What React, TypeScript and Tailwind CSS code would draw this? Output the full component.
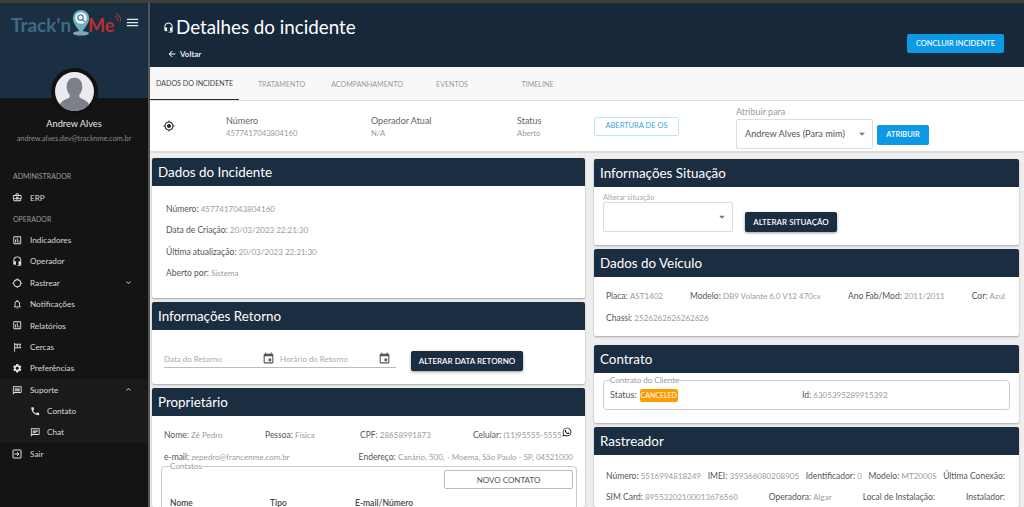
import React from 'react';
import {
  MdOutlineBusinessCenter,
  MdOutlineAssessment,
  MdHeadsetMic,
  MdGpsNotFixed,
  MdGpsFixed,
  MdOutlineNotifications,
  MdOutlineTour,
  MdSettings,
  MdOutlineMessage,
  MdCall,
  MdOutlineChat,
  MdExpandMore,
  MdExpandLess,
  MdArrowBack,
  MdEvent,
  MdArrowDropDown,
  MdMenu,
} from 'react-icons/md';
import { FaWhatsapp } from 'react-icons/fa';

const Logo = () => (
  <div className="w-[108px] shrink-0 flex items-center h-[30px] font-['Lato',sans-serif] font-bold leading-none">
    <span className="text-[#3d6a85] text-[19px] w-[59px] shrink-0 whitespace-nowrap pt-[4px]">Track'n</span>
    <svg width="22" height="27" viewBox="0 0 24 30" className="-mb-[1px] shrink-0">
      <ellipse cx="12" cy="27" rx="9" ry="2.500" fill="#7fa6b5" />
      <path d="M12 27 C7 20 3 16 3 10 a9 9 0 0 1 18 0 C21 16 17 20 12 27 Z" fill="#6fb0bf" />
      <circle cx="12" cy="10" r="6.500" fill="#f2f5f6" />
      <circle cx="11.500" cy="9.500" r="3" fill="none" stroke="#5c8a9c" strokeWidth="1.500" />
      <path d="M14 12 l2.500 2.500" stroke="#5c8a9c" strokeWidth="1.500" />
    </svg>
    <span className="text-[#b5302f] text-[18px] pt-[5px] -ml-[4px]">Me</span>
    <svg width="8" height="14" viewBox="0 0 9 14" className="mb-[6px] shrink-0" fill="none" stroke="#b5302f" strokeWidth="1.200">
      <path d="M1 4 a4 4 0 0 1 3 5" />
      <path d="M2 1 a7 7 0 0 1 5 9" />
    </svg>
  </div>
);

const Avatar = () => (
  <div className="w-[47px] h-[47px] rounded-full bg-[#121212] p-[4px]">
    <div className="w-full h-full rounded-full bg-[#e9ebef] overflow-hidden">
      <svg viewBox="0 0 40 40" className="w-full h-full">
        <path
          d="M20 6 c-5 0 -8 3.500 -8 9 c0 3 1 6 3 8 v3 c-2 2 -9 3 -10 8 v6 h30 v-6 c-1 -5 -8 -6 -10 -8 v-3 c2 -2 3 -5 3 -8 c0 -5.500 -3 -9 -8 -9 Z"
          fill="#7d8087"
        />
      </svg>
    </div>
  </div>
);

const ExitBox = () => (
  <svg width="10" height="10" viewBox="0 0 10 10" fill="none" stroke="#e4e4e4" strokeWidth="1">
    <rect x="1" y="1" width="8" height="8" rx="0.500" />
    <path d="M2.500 5 h4.500 M5 3.200 l2 1.800 l-2 1.800" />
  </svg>
);

type NavItem = { label: string; icon: React.ReactNode; trail?: React.ReactNode };

const NavRow = ({ label, icon, trail }: NavItem) => (
  <div className="flex items-center h-[21.4px] pl-[12px] pr-[15px] text-[#d9d9d9]">
    <span className="w-[18px] flex justify-start text-[#e4e4e4] text-[10.5px]">{icon}</span>
    <span className="text-[8.2px] flex-1">{label}</span>
    {trail}
  </div>
);

const SubRow = ({ label, icon }: NavItem) => (
  <div className="flex items-center h-[21.4px] pl-[30px] text-[#d9d9d9]">
    <span className="w-[17px] flex text-[#e4e4e4] text-[10.5px]">{icon}</span>
    <span className="text-[8.2px]">{label}</span>
  </div>
);

const Sidebar = () => (
  <aside className="w-[150px] shrink-0 flex flex-col bg-[#141414] border-r-[2px] border-[#555]">
    <div className="h-[95px] bg-[#1b2f43] flex flex-col pl-[11px] pt-[4px] relative">
      <div className="flex items-center">
        <Logo />
        <MdMenu className="text-[#e6e6e6] text-[15px] ml-[6px] shrink-0" />
      </div>
      <div className="absolute left-[51px] top-[65px]">
        <Avatar />
      </div>
    </div>
    <div className="flex flex-col items-center pt-[20px]">
      <div className="text-[#e8e8e8] text-[9.2px] leading-[12px]">Andrew Alves</div>
      <div className="text-[#8d8d8d] text-[7.3px] leading-[10px] mt-[4px]">andrew.alves.dev@tracknme.com.br</div>
    </div>
    <div className="mt-[27px] text-[7px] text-[#9a9a9a] pl-[13px] leading-[10px]">ADMINISTRADOR</div>
    <div className="mt-[6px]">
      <NavRow label="ERP" icon={<MdOutlineBusinessCenter />} />
    </div>
    <div className="mt-[6px] text-[7px] text-[#9a9a9a] pl-[13px] leading-[10px]">OPERADOR</div>
    <div className="mt-[5px]">
      <NavRow label="Indicadores" icon={<MdOutlineAssessment />} />
      <NavRow label="Operador" icon={<MdHeadsetMic />} />
      <NavRow label="Rastrear" icon={<MdGpsNotFixed />} trail={<MdExpandMore className="text-[9px] text-[#ccc]" />} />
      <NavRow label="Notificações" icon={<MdOutlineNotifications />} />
      <NavRow label="Relatórios" icon={<MdOutlineAssessment />} />
      <NavRow label="Cercas" icon={<MdOutlineTour />} />
      <NavRow label="Preferências" icon={<MdSettings />} />
      <div className="bg-[#1a1a1a]">
        <NavRow label="Suporte" icon={<MdOutlineMessage />} trail={<MdExpandLess className="text-[9px] text-[#ccc]" />} />
        <SubRow label="Contato" icon={<MdCall />} />
        <SubRow label="Chat" icon={<MdOutlineChat />} />
      </div>
      <NavRow label="Sair" icon={<ExitBox />} />
    </div>
  </aside>
);

const Card = ({ title, children, className }: { title: string; children: React.ReactNode; className?: string }) => (
  <section className={`bg-white rounded-[2px] shadow-[0_1px_2px_rgba(0,0,0,0.3)] overflow-hidden ${className ?? ''}`}>
    <h2 className="bg-[#1b2d40] h-[28px] pl-[6px] pt-[1px] flex items-center text-white text-[13.4px] leading-none">{title}</h2>
    {children}
  </section>
);

const Field = ({ k, v, className }: { k: string; v: string; className?: string }) => (
  <span className={`text-[8.5px] leading-[12px] whitespace-nowrap ${className ?? ''}`}>
    <span className="text-[#555]">{k}: </span>
    <span className="text-[#9b9b9b] text-[8px]">{v}</span>
  </span>
);

const DarkButton = ({ label, className }: { label: string; className?: string }) => (
  <button className={`bg-[#1b2d40] text-white text-[8px] font-semibold rounded-[2px] shadow-[0_1px_3px_rgba(0,0,0,0.4)] ${className ?? ''}`}>{label}</button>
);

const tabs = [
  { label: 'DADOS DO INCIDENTE', w: 'w-[89px]', active: true },
  { label: 'TRATAMENTO', w: 'w-[85px]' },
  { label: 'ACOMPANHAMENTO', w: 'w-[86px]' },
  { label: 'EVENTOS', w: 'w-[84px]' },
  { label: 'TIMELINE', w: 'w-[87px]' },
];

const Header = () => (
  <>
    <header className="h-[64px] shrink-0 bg-[#17283a] flex justify-between pl-[13px] pr-[20px]">
      <div className="pt-[10px]">
        <div className="flex items-center text-white">
          <MdHeadsetMic className="text-[11px] mr-[2px]" />
          <span className="text-[18.8px] leading-[28px]">Detalhes do incidente</span>
        </div>
        <div className="flex items-center mt-[7px] ml-[4px] text-white text-[8px] font-semibold">
          <MdArrowBack className="text-[10px] mr-[3px]" />
          Voltar
        </div>
      </div>
      <button className="self-start mt-[31px] w-[97px] h-[19px] bg-[#0c9ae6] text-white text-[7.5px] rounded-[2px] font-medium">CONCLUIR INCIDENTE</button>
    </header>
    <nav className="h-[34px] shrink-0 bg-[#f8f8f8] border-b border-[#dedede] flex">
      {tabs.map((t) => (
        <div
          key={t.label}
          className={`${t.w} ${t.active ? 'text-[#444] border-b border-[#1b2d40]' : 'text-[#9a9a9a]'} shrink-0 flex items-center justify-center pt-[3px] text-[7.1px] whitespace-nowrap`}
        >
          {t.label}
        </div>
      ))}
    </nav>
    <div className="h-[52px] shrink-0 bg-white border-b-[2px] border-[#dcdcdc] flex items-center relative">
      <MdGpsFixed className="ml-[13px] text-[12px] text-[#222] shrink-0" />
      <div className="ml-[51px] w-[145px] shrink-0 leading-[13px] pt-[2px]">
        <div className="text-[9px] text-[#666]">Número</div>
        <div className="text-[7.7px] text-[#9b9b9b]">4577417043804160</div>
      </div>
      <div className="w-[146px] shrink-0 leading-[13px] pt-[2px]">
        <div className="text-[9px] text-[#666]">Operador Atual</div>
        <div className="text-[7.7px] text-[#9b9b9b]">N/A</div>
      </div>
      <div className="w-[77px] shrink-0 leading-[13px] pt-[2px]">
        <div className="text-[9px] text-[#666]">Status</div>
        <div className="text-[7.7px] text-[#9b9b9b]">Aberto</div>
      </div>
      <button className="w-[85px] h-[19px] shrink-0 border border-[#bfe3f7] rounded-[2px] text-[#3aa5e0] text-[7.5px]">ABERTURA DE OS</button>
      <div className="ml-[57px] mt-[2px] shrink-0 flex flex-col">
        <span className="text-[9px] text-[#999] leading-[11px]">Atribuir para</span>
        <div className="mt-[2px] w-[137px] h-[30px] border border-[#ddd] rounded-[2px] flex items-center justify-between pl-[8px] pr-[3px] text-[#555] text-[9.2px]">
          Andrew Alves (Para mim)
          <MdArrowDropDown className="text-[14px] text-[#777]" />
        </div>
      </div>
      <button className="ml-[4px] mt-[17px] w-[52px] h-[20px] shrink-0 bg-[#0c9ae6] text-white text-[7.5px] rounded-[2px] font-semibold">ATRIBUIR</button>
    </div>
  </>
);

const LeftColumn = () => (
  <div className="w-[433px] shrink-0 flex flex-col gap-[4px]">
    <Card title="Dados do Incidente" className="h-[140px] shrink-0">
      <div className="pl-[14px] pt-[13px] flex flex-col">
        <Field k="Número" v="4577417043804160" className="!leading-[21.400px]" />
        <Field k="Data de Criação" v="20/03/2023 22:21:30" className="!leading-[21.400px]" />
        <Field k="Última atualização" v="20/03/2023 22:21:30" className="!leading-[21.400px]" />
        <Field k="Aberto por" v="Sistema" className="!leading-[21.400px]" />
      </div>
    </Card>
    <Card title="Informações Retorno" className="h-[82px] shrink-0">
      <div className="pl-[12px] pt-[21px] flex items-start">
        <div className="flex border-b border-[#bbb] w-[232px] h-[17px] text-[8px] text-[#aaa] items-start">
          <span className="w-[98px] pt-[2px] leading-[12px]">Data do Retorno</span>
          <MdEvent className="text-[13px] text-[#555] mt-[1px]" />
          <span className="ml-[5px] w-[98px] pt-[2px] leading-[12px]">Horário do Retorno</span>
          <MdEvent className="text-[13px] text-[#555] mt-[1px]" />
        </div>
        <DarkButton label="ALTERAR DATA RETORNO" className="ml-[15px] w-[112px] h-[20px]" />
      </div>
    </Card>
    <Card title="Proprietário" className="flex-1">
      <div className="px-[12px] pt-[13px]">
        <div className="flex items-center h-[12px]">
          <Field k="Nome" v="Zé Pedro" className="w-[101px]" />
          <Field k="Pessoa" v="Física" className="w-[95px]" />
          <Field k="CPF" v="28658991873" className="w-[113px]" />
          <div className="relative flex">
            <Field k="Celular" v="(11)95555-5555" />
            <FaWhatsapp className="absolute -right-[10px] -top-[2px] text-[10px] text-black" />
          </div>
        </div>
        <div className="flex items-center mt-[10px] h-[12px]">
          <Field k="e-mail" v="zepedro@francenme.com.br" className="w-[195px]" />
          <Field k="Endereço" v="Canário, 500, - Moema, São Paulo - SP, 04521000" />
        </div>
        <fieldset className="-ml-[3px] -mr-[4px] -mt-[1px] border border-[#ccc] rounded-[4px] pl-[8px] pr-[3px] h-[60px]">
          <legend className="text-[8px] text-[#999] leading-[8px]">Contatos</legend>
          <div className="flex justify-end">
            <button className="w-[129px] h-[19px] border border-[#bbb] rounded-[2px] text-[8px] text-[#555]">NOVO CONTATO</button>
          </div>
          <div className="flex mt-[10px] text-[8.5px] leading-[8px] font-semibold text-[#444]">
            <span className="w-[100px]">Nome</span>
            <span className="w-[85px]">Tipo</span>
            <span>E-mail/Número</span>
          </div>
        </fieldset>
      </div>
    </Card>
  </div>
);

const RightColumn = () => (
  <div className="w-[425px] shrink-0 flex flex-col gap-[4px] pt-[1px]">
    <Card title="Informações Situação" className="h-[86px] shrink-0">
      <div className="pl-[9px] pt-[7px] flex items-end">
        <div>
          <div className="text-[7.5px] leading-[8px] text-[#aaa]">Alterar situação</div>
          <div className="w-[130px] h-[30px] border border-[#ddd] rounded-[2px] flex items-center justify-end pr-[3px]">
            <MdArrowDropDown className="text-[14px] text-[#777]" />
          </div>
        </div>
        <DarkButton label="ALTERAR SITUAÇÃO" className="ml-[12px] w-[92px] h-[20px]" />
      </div>
    </Card>
    <Card title="Dados do Veículo" className="h-[87px] shrink-0">
      <div className="pl-[12px] pr-[14px] pt-[13px]">
        <div className="flex justify-between">
          <Field k="Placa" v="AST1402" />
          <Field k="Modelo" v="DB9 Volante 6.0 V12 470cv" />
          <Field k="Ano Fab/Mod" v="2011/2011" />
          <Field k="Cor" v="Azul" />
        </div>
        <div className="flex mt-[10px]">
          <Field k="Chassi" v="2526262626262626" />
        </div>
      </div>
    </Card>
    <div className="h-[1px] shrink-0" />
    <Card title="Contrato" className="h-[78px] shrink-0">
      <fieldset className="mx-[9px] mt-[3px] border border-[#ccc] rounded-[4px] px-[6px] h-[34px]">
        <legend className="text-[8px] text-[#999] leading-[8px]">Contrato do Cliente</legend>
        <div className="flex items-center h-[16px] mt-[3px]">
          <div className="w-[192px] flex items-center text-[9px] text-[#555]">
            Status:
            <span className="ml-[3px] bg-[#ff9a00] text-white text-[7px] rounded-[2px] px-[2px] w-[38px] justify-center h-[13px] flex items-center">CANCELED</span>
          </div>
          <Field k="Id" v="6305395289915392" />
        </div>
      </fieldset>
    </Card>
    <Card title="Rastreador" className="flex-1">
      <div className="pl-[12px] pr-[14px] pt-[15px]">
        <div className="flex justify-between">
          <Field k="Número" v="5516994818249" />
          <Field k="IMEI" v="359366080208905" />
          <Field k="Identificador" v="0" />
          <Field k="Modelo" v="MT2000S" />
          <span className="text-[8.5px] leading-[12px] text-[#555] whitespace-nowrap">Última Conexão:</span>
        </div>
        <div className="flex justify-between mt-[9px]">
          <Field k="SIM Card" v="89553202100013676560" />
          <Field k="Operadora" v="Algar" />
          <span className="text-[8.5px] leading-[12px] text-[#555] whitespace-nowrap">Local de Instalação:</span>
          <span className="text-[8.5px] leading-[12px] text-[#555] whitespace-nowrap">Instalador:</span>
        </div>
      </div>
    </Card>
  </div>
);

export default function App() {
  return (
    <div className="w-[1024px] h-[507px] overflow-hidden flex flex-col bg-[#eeeeee] font-['Lato',sans-serif]">
      <div className="h-[3px] shrink-0 bg-[#3c4038]" />
      <div className="flex-1 min-h-0 flex">
        <Sidebar />
        <main className="flex-1 min-w-0 flex flex-col">
          <Header />
          <div className="flex-1 min-h-0 flex gap-[9px] pl-[2px] pt-[5px]">
            <LeftColumn />
            <RightColumn />
          </div>
        </main>
      </div>
    </div>
  );
}
